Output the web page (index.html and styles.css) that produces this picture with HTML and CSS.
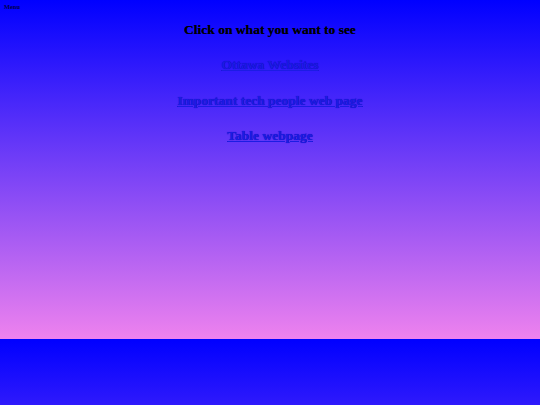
FILE: index.html
```html
<!DOCTYPE html>
<html>
<head>
<meta charset="utf-8">
<link rel="stylesheet" href="styles.css">
</head>
<body>
<div class="menu">Menu</div>
<div class="content">
<h3 class="title">Click on what you want to see</h3>
<a class="link" href="#">Ottawa Websites</a>
<a class="link" href="#">Important tech people web page</a>
<a class="link" href="#">Table webpage</a>
</div>
</body>
</html>
```
FILE: styles.css
```css
html {
  background: linear-gradient(#0000ff, #ee82ee);
  background-size: 100% 339px;
  background-repeat: repeat;
}
body {
  margin: 0;
  font-family: "Liberation Serif", serif;
}
.menu {
  font-size: 6.4px;
  font-weight: bold;
  color: #000050;
  padding: 3px 0 0 4px;
  line-height: 8px;
}
.content {
  display: flex;
  flex-direction: column;
  align-items: center;
  gap: 19.4px;
  padding-top: 11px;
}
.title {
  margin: 0;
  font-size: 13.5px;
  line-height: 16px;
  color: #000;
  text-shadow: 0 0 0.6px #000040;
}
.link {
  font-size: 13.5px;
  line-height: 16px;
  font-weight: bold;
  color: #1c1ce4;
  text-shadow: 0 0 0.8px #0000a0;
}
```
